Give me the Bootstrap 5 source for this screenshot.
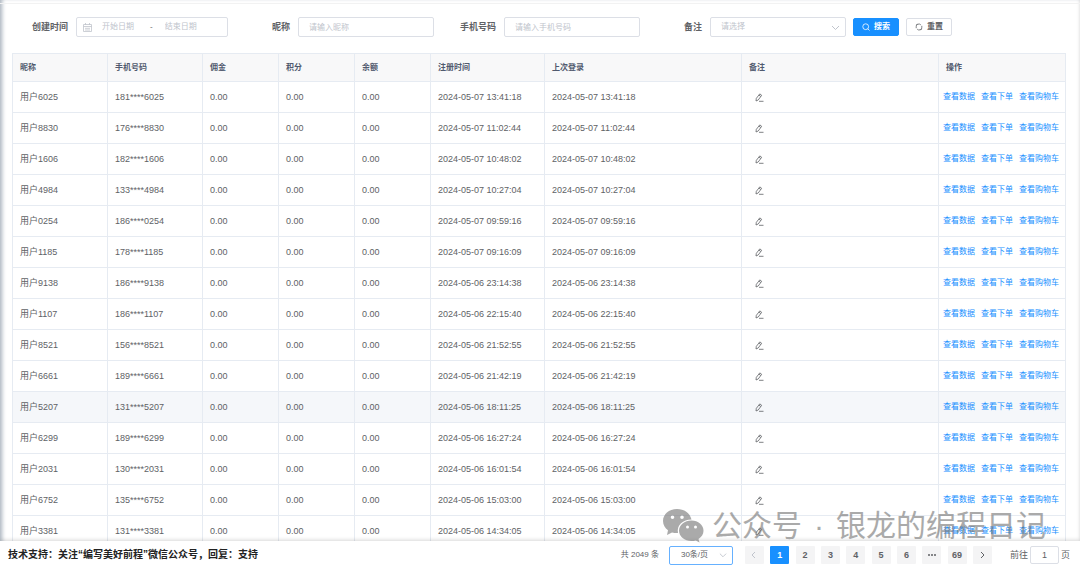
<!DOCTYPE html>
<html lang="zh-CN">
<head>
<meta charset="utf-8">
<meta name="viewport" content="width=device-width, initial-scale=1">
<title>用户列表</title>
<link href="https://cdn.jsdelivr.net/npm/bootstrap@5.3.0/dist/css/bootstrap.min.css" rel="stylesheet">
<style>
:root{--line:#e6ebf2;--field:#dcdfe6;--ink:#606266;--hint:#c0c4cc;--brand:#1890ff}
body{font-family:"Liberation Sans","Noto Sans CJK SC",sans-serif;font-size:9px;line-height:16px;color:var(--ink);background:#fff}
.page{height:100vh;box-shadow:inset 4px 0 4px -2px #a9b2bd,inset -3px 0 3px -2px #e4e4e4}
.topline{height:4px;border-bottom:1px solid #f2f2f2}
.filters{height:49px;padding:0 32px 3px}
.pair{margin-right:26px}
.filters label{font-weight:700;width:36px;margin-right:8px;text-align:right;white-space:nowrap}
.field{height:20px;border:1px solid var(--field);border-radius:2px;background:#fff;font-size:8px;color:var(--ink);padding:0 10px;width:136px;line-height:16px}
.field::placeholder,.range input::placeholder{color:var(--hint);opacity:1}
.range{width:152px;padding:0 6px}
.range svg{color:var(--hint);margin-right:10px}
.range input{border:0;outline:0;background:none;width:48px;padding:0;font-size:8px;line-height:16px}
.dash{margin-right:12px}
.pick{appearance:none;color:var(--hint)}
.act{height:18px;width:46px;border-radius:2px;font-size:8px;font-weight:700;line-height:16px;padding:0;border:1px solid var(--field);color:var(--ink);background:#fff;margin-left:7px}
.act.primary{background:var(--brand);border-color:var(--brand);color:#fff}
.scroll{min-height:0;padding:0 14px 0 12px}
.users{table-layout:fixed;border:1px solid var(--line)}
.users th,.users td{border:1px solid var(--line);padding:0 7px;height:31px;vertical-align:middle;white-space:nowrap;color:var(--ink);line-height:16px}
.users th{height:28px;font-size:8px;color:#515a6e;background:#f8f8f9}
.users tr.hovered td{background:#f5f7fa}
.users a{font-size:8px;color:var(--brand);text-decoration:none}
.users td.ops{padding:0 0 0 4px}
.links{gap:6px}
.edit{border:0;background:none;padding:0;margin-left:6px;color:var(--ink);line-height:8px;vertical-align:middle}
.foot{height:28px;box-shadow:0 -1px 4px rgba(0,0,0,.16);background:#fff;padding:0 10px 0 8px;z-index:2}
.support{font-size:10px;color:#222;font-weight:700}
.total{font-size:8px;margin-right:10px}
.size{width:64px;height:19px;border:1px solid #66b1ff;border-radius:2px;padding:0 11px;appearance:none;font-size:8px;color:var(--ink);background:#fff;line-height:16px;display:block}
.pages{width:247px;margin:0 18px 0 12px}
.pg{width:19px;height:18px;border:0;border-radius:1px;padding:0;background:#f4f4f5;color:var(--ink);font-size:9px;font-weight:700;line-height:18px}
.pg.now{background:var(--brand);color:#fff}
.pg:disabled{color:var(--hint)}
.jump{width:29px;height:18px;border:1px solid var(--field);border-radius:2px;text-align:center;padding:0;margin:0 2px;color:var(--ink);font-size:9px}
.chev{right:6px;top:50%;margin-top:-4px;color:var(--hint);pointer-events:none}
.stamp{right:34px;bottom:23px;z-index:3;pointer-events:none;font-size:30px;line-height:40px;color:#777;opacity:.62}
.stamp svg{margin-right:8px}
.dot{width:34px;text-align:center}
svg{fill:none;stroke:currentColor;display:block}
</style>
</head>
<body>
<div class="page d-flex flex-column position-relative overflow-hidden">
  <div class="topline flex-shrink-0"></div>
  <form class="filters d-flex align-items-center flex-shrink-0" onsubmit="return false">
    <div class="pair d-flex align-items-center">
      <label for="from">创建时间</label>
      <div class="field range d-flex align-items-center">
        <svg class="flex-shrink-0" width="9" height="9" viewBox="0 0 9 9" stroke-width=".8"><path d="M.5 1.500h8v7h-8zM.5 3.500h8M2.500 0v2M6.500 0v2M2 5.300h5M2 7h5"/></svg>
        <input id="from" placeholder="开始日期">
        <span class="dash">-</span>
        <input id="to" placeholder="结束日期" aria-label="结束日期">
      </div>
    </div>
    <div class="pair d-flex align-items-center"><label for="nick">昵称</label><input id="nick" class="field" placeholder="请输入昵称"></div>
    <div class="pair d-flex align-items-center"><label for="phone">手机号码</label><input id="phone" class="field" placeholder="请输入手机号码"></div>
    <div class="d-flex align-items-center"><label for="note">备注</label>
      <div class="position-relative"><select id="note" class="field pick d-block"><option>请选择</option></select>
        <svg class="chev position-absolute" width="9" height="9" viewBox="0 0 9 9"><path d="M1 3l3.500 3.500L8 3"/></svg></div>
    </div>
    <button class="act primary d-flex align-items-center justify-content-center gap-1"><svg width="8" height="8" viewBox="0 0 8 8" stroke-width=".8"><circle cx="3.700" cy="3.700" r="2.900"/><path d="M5.800 5.800L7.500 7.500"/></svg>搜索</button>
    <button type="reset" class="act d-flex align-items-center justify-content-center gap-1"><svg width="8" height="8" viewBox="0 0 8 8" stroke-width=".8"><path d="M1.200 5.200V3.700a2.700 2.700 0 0 1 4.600-1.900M6.800 2.800v1.500a2.700 2.700 0 0 1-4.600 1.900M2.400.8L1.200 2.200M5.600 7.200l1.200-1.400"/></svg>重置</button>
  </form>
  <main class="scroll flex-grow-1 overflow-hidden">
    <table class="users table mb-0">
      <colgroup><col style="width:95px"><col style="width:95px"><col style="width:76px"><col style="width:76px"><col style="width:76px"><col style="width:114px"><col><col><col style="width:127px"></colgroup>
      <thead><tr><th>昵称</th><th>手机号码</th><th>佣金</th><th>积分</th><th>余额</th><th>注册时间</th><th>上次登录</th><th>备注</th><th>操作</th></tr></thead>
      <tbody id="rows"></tbody>
    </table>
  </main>
  <footer class="foot d-flex align-items-center flex-shrink-0">
    <span class="support me-auto">技术支持：关注“编写美好前程”微信公众号，回复：支持</span>
    <span class="total">共 2049 条</span>
    <div class="position-relative"><select class="size" aria-label="每页条数"><option>30条/页</option></select>
      <svg class="chev position-absolute" width="8" height="8" viewBox="0 0 9 9"><path d="M1 3l3.500 3.500L8 3"/></svg></div>
    <nav class="pages d-flex justify-content-between" aria-label="分页">
      <button class="pg" disabled aria-label="上一页"><svg class="mx-auto" width="8" height="8" viewBox="0 0 8 8"><path d="M5 1L2 4l3 3"/></svg></button>
      <button class="pg now">1</button><button class="pg">2</button><button class="pg">3</button><button class="pg">4</button><button class="pg">5</button><button class="pg">6</button>
      <button class="pg" aria-label="更多"><svg class="mx-auto" width="8" height="8" viewBox="0 0 8 8" stroke-width="1.600"><path d="M0 4h2M3 4h2M6 4h2"/></svg></button>
      <button class="pg">69</button>
      <button class="pg" aria-label="下一页"><svg class="mx-auto" width="8" height="8" viewBox="0 0 8 8"><path d="M3 1l3 3-3 3"/></svg></button>
    </nav>
    <label for="jump">前往</label><input id="jump" class="jump" value="1"><span>页</span>
  </footer>
  <div class="stamp position-absolute d-flex align-items-center">
    <svg width="42" height="36" viewBox="0 0 42 36"><path fill="currentColor" stroke="none" fill-rule="evenodd" d="M15 1C6.800 1 1 6.500 1 13c0 4 2 7.200 5 9.300L5 27l5-2.600c2 .6 4 .8 6 .7C14.500 17 21 11.500 29.500 11.500 28 5 22 1 15 1zM10.500 7.500a1.800 1.800 0 1 1 0 3.600 1.800 1.800 0 0 1 0-3.600zm9.500 0a1.800 1.800 0 1 1 0 3.600 1.800 1.800 0 0 1 0-3.600zM29.500 12.500C22.500 12.500 17 17 17 22.700s5.500 10.300 12.500 10.300c1.500 0 3-.2 4.300-.6L37.500 34.500l-1-3.500c3-2 5-5 5-8.300 0-5.700-5.300-10.200-12-10.200zm-4 5a1.500 1.500 0 1 1 0 3 1.500 1.500 0 0 1 0-3zm8 0a1.500 1.500 0 1 1 0 3 1.500 1.500 0 0 1 0-3z"/></svg>
    <span>公众号</span><span class="dot">·</span><span>银龙的编程日记</span>
  </div>
</div>
<script>
const users = [
 ['6025','181','05-07 13:41:18'],['8830','176','05-07 11:02:44'],['1606','182','05-07 10:48:02'],
 ['4984','133','05-07 10:27:04'],['0254','186','05-07 09:59:16'],['1185','178','05-07 09:16:09'],
 ['9138','186','05-06 23:14:38'],['1107','186','05-06 22:15:40'],['8521','156','05-06 21:52:55'],
 ['6661','189','05-06 21:42:19'],['5207','131','05-06 18:11:25'],['6299','189','05-06 16:27:24'],
 ['2031','130','05-06 16:01:54'],['6752','135','05-06 15:03:00'],['3381','131','05-06 14:34:05']];
const pen = '<svg width="9" height="9" viewBox="0 0 9 9" stroke-width=".8"><path d="M1 8l.3-2.600L4.800.9l1.900 1.400L3.200 7 1 8zM3.900 2.100l1.900 1.400M4 8.300h4.500"/></svg>';
document.getElementById('rows').innerHTML = users.map(([id, pre, t]) =>
 `<tr class="${id === '5207' ? 'hovered' : ''}"><td>用户${id}</td><td>${pre}****${id}</td><td>0.00</td><td>0.00</td><td>0.00</td><td>2024-${t}</td><td>2024-${t}</td><td><button class="edit" aria-label="编辑备注">${pen}</button></td><td class="ops"><div class="links d-flex"><a href="#">查看数据</a><a href="#">查看下单</a><a href="#">查看购物车</a></div></td></tr>`).join('');
</script>
<script src="https://cdn.jsdelivr.net/npm/bootstrap@5.3.0/dist/js/bootstrap.bundle.min.js"></script>
</body>
</html>
